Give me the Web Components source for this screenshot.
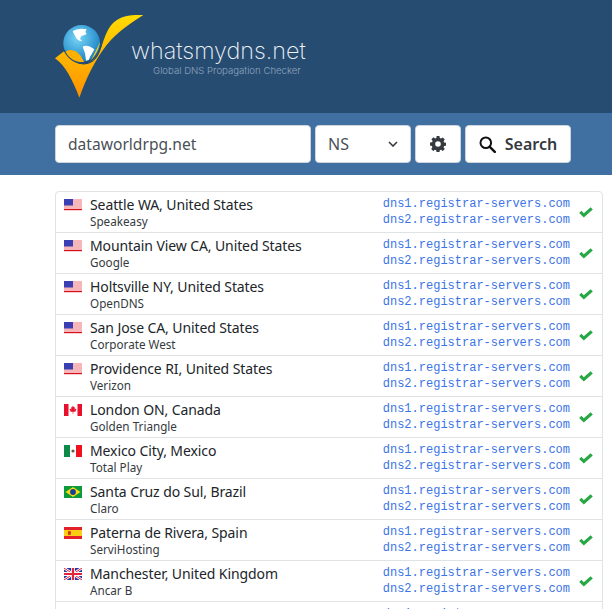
<!DOCTYPE html>
<html lang="en">
<head>
<meta charset="utf-8">
<title>whatsmydns.net</title>
<style>
    html, body { margin: 0; height: 609px; overflow: hidden; background: #fff; }
    body { font-family: "Noto Sans", sans-serif; color: #212529; }
</style>
</head>
<body>
<site-header></site-header>
<search-bar domain="dataworldrpg.net" type="NS"></search-bar>
<result-list>
    <result-row flag="us" place="Seattle WA, United States" isp="Speakeasy"></result-row>
    <result-row flag="us" place="Mountain View CA, United States" isp="Google"></result-row>
    <result-row flag="us" place="Holtsville NY, United States" isp="OpenDNS"></result-row>
    <result-row flag="us" place="San Jose CA, United States" isp="Corporate West"></result-row>
    <result-row flag="us" place="Providence RI, United States" isp="Verizon"></result-row>
    <result-row flag="ca" place="London ON, Canada" isp="Golden Triangle"></result-row>
    <result-row flag="mx" place="Mexico City, Mexico" isp="Total Play"></result-row>
    <result-row flag="br" place="Santa Cruz do Sul, Brazil" isp="Claro"></result-row>
    <result-row flag="es" place="Paterna de Rivera, Spain" isp="ServiHosting"></result-row>
    <result-row flag="gb" place="Manchester, United Kingdom" isp="Ancar B"></result-row>
    <result-row flag="fr" place="Lille, France" isp="Completel"></result-row>
</result-list>

<script>
// Vlaggen als kleine inline svg's, 18x12
const FLAGS = {
    us: `<rect width="18" height="12" fill="#fff"/>
        <path d="M0 1h18M0 3h18M0 5h18M0 7h18M0 9h18" stroke="#ee6f75" stroke-width="1"/>
        <rect y="10" width="18" height="1.2" fill="#d8101c"/>
        <rect width="9" height="6.5" fill="#3c3fb4"/>`,
    ca: `<rect width="18" height="12" fill="#fff"/>
        <rect width="4.5" height="12" fill="#e8112d"/><rect x="13.5" width="4.5" height="12" fill="#e8112d"/>
        <path d="M9 1.6l1 1.8 1-.4-.4 2.4 1.4-.9.4 1-1 1.5.4.7H9.3v2h-.6v-2H6.2l.4-.7-1-1.5.4-1 1.4.9L6.999 3l1 .4z" fill="#e8112d"/>`,
    mx: `<rect width="6" height="12" fill="#0d8a4a"/><rect x="6" width="6" height="12" fill="#fff"/><rect x="12" width="6" height="12" fill="#f0101e"/>
        <circle cx="9" cy="6" r="1.6" fill="#6b5a3a"/>`,
    br: `<rect width="18" height="12" fill="#0b9a3c"/>
        <path d="M9 1l7.5 5L9 11 1.5 6z" fill="#f8dc10"/>
        <circle cx="9" cy="6" r="2.9" fill="#1d3f94"/>`,
    es: `<rect width="18" height="12" fill="#e4202a"/><rect y="3" width="18" height="6" fill="#fbcd14"/>
        <rect x="4" y="4.2" width="2.8" height="3.6" fill="#c8361c"/>`,
    gb: `<rect width="18" height="12" fill="#2a3a9c"/>
        <path d="M0 0l18 12M18 0L0 12" stroke="#fff" stroke-width="2.6"/>
        <path d="M0 0l18 12M18 0L0 12" stroke="#e0263a" stroke-width="1"/>
        <path d="M9 0v12M0 6h18" stroke="#fff" stroke-width="3.8"/>
        <path d="M9 0v12M0 6h18" stroke="#e0263a" stroke-width="2.2"/>`,
    fr: `<rect width="6" height="12" fill="#2a3a9c"/><rect x="6" width="6" height="12" fill="#fff"/><rect x="12" width="6" height="12" fill="#e8202e"/>`
};

class SiteHeader extends HTMLElement {
    constructor() {
        super();
        const root = this.attachShadow({ mode: "open" });
        root.innerHTML = `
        <style>
            :host { display: block; background: #274c72; height: 113px; box-sizing: border-box; padding: 10px 0 0 50px; }
            a { display: flex; color: inherit; text-decoration: none; }
            svg { display: block; flex: none; }
            .words { margin: 27px 0 0 -19px; font-family: Inter, sans-serif; }
            .name { font-size: 23.4px; font-weight: 200; line-height: 28px; color: #eef2f6; }
            .tag { font-size: 9.6px; font-weight: 300; line-height: 12px; color: #8fa6bf; margin: 0 0 0 22px; white-space: nowrap; }
        </style>
        <a href="#">
            <!-- logo getekend op 3x, zelfde maat als de uitsnede -->
            <svg width="100" height="95" viewBox="0 0 300 285">
                <defs>
                    <linearGradient id="tick" x1="0" y1="0" x2="0" y2="1">
                        <stop offset="0" stop-color="#ffdc00"/>
                        <stop offset="1" stop-color="#ff9000"/>
                    </linearGradient>
                    <radialGradient id="sea" cx=".4" cy=".35" r=".75">
                        <stop offset="0" stop-color="#7ad6f6"/>
                        <stop offset="1" stop-color="#0e78c0"/>
                    </radialGradient>
                </defs>
                <path fill="url(#tick)" d="M280 15C240 14 212 18 190 38C172 56 166 78 156 104C148 128 136 150 112 160C85 168 55 150 42 124L15 145C45 165 68 210 88 263C108 205 135 150 170 105C200 68 240 40 280 15Z"/>
                <circle cx="95" cy="100" r="55" fill="url(#sea)"/>
                <path fill="#fff" d="M68 64C76 58 94 54 110 58L106 66L110 72L102 76L94 78L90 86L96 94L88 92L80 86L74 76Z"/>
                <path fill="#fff" d="M98 110C108 104 123 110 133 118C129 128 122 135 116 150L108 152L105 130Z"/>
                <path fill="none" stroke="#274c72" stroke-width="4" d="M44 122C58 150 86 166 112 160C136 154 150 128 156 96"/>
                <path fill="#ffb000" d="M46 125C60 115 84 118 98 148C100 153 102 156 104 156C80 158 60 150 46 125Z"/>
                <path fill="#ffcc00" d="M150 96C146 118 136 138 122 152C134 132 142 112 150 96Z"/>
            </svg>
            <div class="words">
                <div class="name">whatsmydns.net</div>
                <div class="tag">Global DNS Propagation Checker</div>
            </div>
        </a>`;
    }
}

class SearchBar extends HTMLElement {
    constructor() {
        super();
        const root = this.attachShadow({ mode: "open" });
        root.innerHTML = `
        <style>
            :host { display: flex; gap: 4px; background: #3f70a1; height: 62px; box-sizing: border-box; padding: 12px 41px 12px 55px; font-family: "Noto Sans", sans-serif; }
            .box { box-sizing: border-box; height: 38px; background: #fff; border: 1px solid #ced4da; border-radius: 4px; display: flex; align-items: center; color: #343a40; font-size: 16px; }
            .domain { width: 256px; padding: 0 12px; color: #495057; font-size: 15.6px; }
            .type { width: 96px; padding: 0 12px; justify-content: space-between; color: #495057; }
            .gear { width: 46px; justify-content: center; }
            .go { width: 106px; justify-content: center; gap: 9px; font-weight: 600; }
        </style>
        <div class="box domain">${this.getAttribute("domain")}</div>
        <div class="box type">${this.getAttribute("type")}
            <svg width="10" height="6" viewBox="0 0 10 6"><path d="M1 1l4 4 4-4" fill="none" stroke="#343a40" stroke-width="1.6"/></svg>
        </div>
        <div class="box gear">
            <svg width="16" height="16" viewBox="0 0 16 16"><path fill="#343a40" fill-rule="evenodd" d="M6.6 0h2.8l.4 2.1 1.2.5 1.8-1.2 2 2-1.2 1.8.5 1.2 2.1.4v2.8l-2.1.4-.5 1.2 1.2 1.8-2 2-1.8-1.2-1.2.5-.4 2.1H6.6l-.4-2.1-1.2-.5-1.8 1.2-2-2 1.2-1.8-.5-1.2L0 9.4V6.6l2.1-.4.5-1.2-1.2-1.8 2-2 1.8 1.2 1.2-.5zM8 5.2a2.8 2.8 0 1 0 0 5.6 2.8 2.8 0 0 0 0-5.6z"/></svg>
        </div>
        <div class="box go">
            <svg width="17" height="17" viewBox="0 0 17 17"><circle cx="6.8" cy="6.8" r="5.3" fill="none" stroke="#111" stroke-width="2"/><path d="M10.8 10.8l5 5" stroke="#111" stroke-width="2.4" stroke-linecap="round"/></svg>
            Search
        </div>`;
    }
}

class ResultList extends HTMLElement {
    constructor() {
        super();
        const root = this.attachShadow({ mode: "open" });
        root.innerHTML = `
        <style>
            :host { display: block; margin: 16px 9px 0 55px; border: 1px solid #dfe3e6; border-radius: 4px; }
        </style>
        <slot></slot>`;
    }
}

class ResultRow extends HTMLElement {
    constructor() {
        super();
        const root = this.attachShadow({ mode: "open" });
        root.innerHTML = `
        <style>
            :host { display: flex; height: 41px; box-sizing: border-box; border-bottom: 1px solid #dfe3e6; padding: 3px 9px 0 8px; }
            :host(:last-child) { border-bottom: 0; }
            svg.flag { flex: none; margin: 4px 8px 0 0; }
            .where { flex: 1; min-width: 0; white-space: nowrap; }
            .place { font-size: 14px; line-height: 19px; color: #212529; letter-spacing: -.1px; }
            .isp { font-size: 11.7px; line-height: 16px; color: #343a40; margin-top: -1px; }
            .ns { font: 12px/16px "Liberation Mono", monospace; color: #3b74e6; text-align: right; white-space: nowrap; margin-top: 1px; }
            .ok { flex: none; margin: 12px 0 0 9px; }
        </style>
        <svg class="flag" width="18" height="12" viewBox="0 0 18 12">${FLAGS[this.getAttribute("flag")]}</svg>
        <div class="where">
            <div class="place">${this.getAttribute("place")}</div>
            <div class="isp">${this.getAttribute("isp")}</div>
        </div>
        <div class="ns">
            <div>dns1.registrar-servers.com</div>
            <div>dns2.registrar-servers.com</div>
        </div>
        <svg class="ok" width="14" height="11" viewBox="0 0 14 11"><path fill="#28a745" d="M4.8 10.6L.2 6 2.4 3.8l2.4 2.4L11.6.2 13.8 2.4z"/></svg>`;
    }
}

customElements.define("site-header", SiteHeader);
customElements.define("search-bar", SearchBar);
customElements.define("result-list", ResultList);
customElements.define("result-row", ResultRow);
</script>
</body>
</html>
